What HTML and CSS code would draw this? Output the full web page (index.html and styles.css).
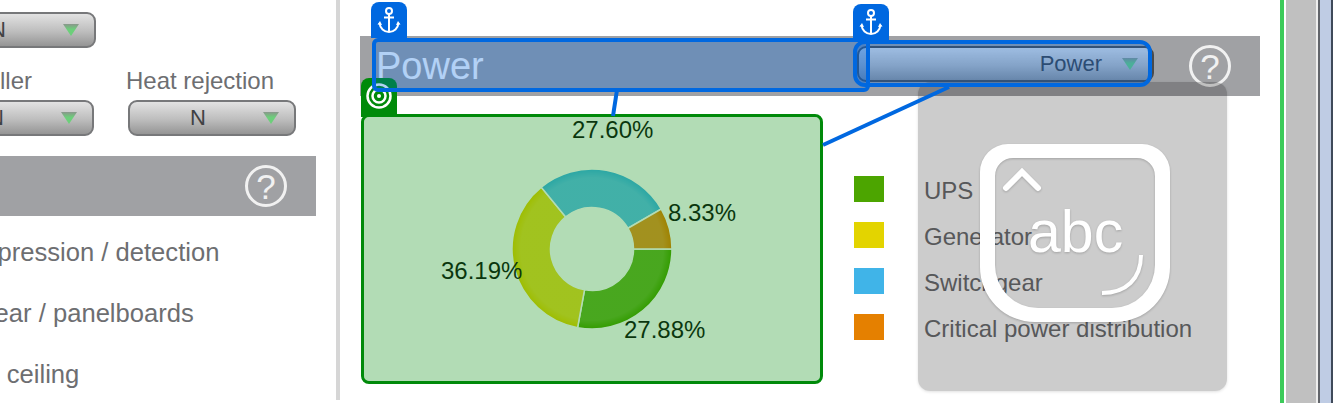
FILE: index.html
```html
<!DOCTYPE html>
<html lang="en">
<head>
    <meta charset="UTF-8">
    <meta name="viewport" content="width=device-width, initial-scale=1.0">
    <title>Dashboard editor</title>
    <link rel="stylesheet" href="styles.css">
</head>
<body>
    <div class="page">
        <div class="sidebar">
            <div class="field-row first-row">
                <div class="field">
                    <div class="dropdown"><span class="dropdown-text">N</span><span class="arrow"></span></div>
                </div>
            </div>
            <div class="field-row second-row">
                <div class="field">
                    <div class="field-label">Chiller</div>
                    <div class="dropdown"><span class="dropdown-text">N</span><span class="arrow"></span></div>
                </div>
                <div class="field">
                    <div class="field-label">Heat rejection</div>
                    <div class="dropdown"><span class="dropdown-text">N</span><span class="arrow"></span></div>
                </div>
            </div>
            <div class="section-bar side-bar">
                <span class="help">?</span>
            </div>
            <div class="side-list">
                <div>Fire suppression / detection</div>
                <div>Switchgear / panelboards</div>
                <div class="side-short">Raised ceiling</div>
            </div>
        </div>

        <div class="main">
            <div class="section-bar main-bar">
                <span class="bar-title">Power</span>
                <div class="dropdown dropdown-wide"><span class="dropdown-text">Power</span><span class="arrow"></span></div>
                <span class="help">?</span>
            </div>

            <div class="chart-row">
                <div class="chart-card">
                    <svg class="donut" width="162" height="162" viewBox="-80 -80 160 160">
                        <defs>
                            <radialGradient id="gloss" gradientUnits="userSpaceOnUse" cx="0" cy="0" r="80">
                                <stop offset="0.5" stop-color="#fff" stop-opacity="0.16"></stop>
                                <stop offset="0.88" stop-color="#fff" stop-opacity="0.16"></stop>
                                <stop offset="0.98" stop-color="#fff" stop-opacity="0"></stop>
                            </radialGradient>
                        </defs>
                        <path class="slice" fill="#4ca500" d="M79 0 A79 79 0 0 1 -14.23 77.7 L-7.38 40.33 A41 41 0 0 0 41 0Z"></path>
                        <path class="slice" fill="#e3d400" d="M-14.23 77.7 A79 79 0 0 1 -50.09 -61.09 L-25.99 -31.71 A41 41 0 0 0 -7.38 40.33Z"></path>
                        <path class="slice" fill="#40b4e8" d="M-50.09 -61.09 A79 79 0 0 1 68.42 -39.49 L35.51 -20.5 A41 41 0 0 0 -25.99 -31.71Z"></path>
                        <path class="slice" fill="#e58000" d="M68.42 -39.49 A79 79 0 0 1 79 0 L41 0 A41 41 0 0 0 35.51 -20.5Z"></path>
                        <path fill="url(#gloss)" fill-rule="evenodd" d="M79 0 A79 79 0 1 1 -79 0 A79 79 0 1 1 79 0Z M41 0 A41 41 0 1 0 -41 0 A41 41 0 1 0 41 0Z"></path>
                    </svg>
                    <span class="pct pct-switch">27.60%</span>
                    <span class="pct pct-critical">8.33%</span>
                    <span class="pct pct-generator">36.19%</span>
                    <span class="pct pct-ups">27.88%</span>
                </div>

                <div class="legend">
                    <div class="legend-row"><span class="swatch swatch-ups"></span>UPS</div>
                    <div class="legend-row"><span class="swatch swatch-generator"></span>Generator</div>
                    <div class="legend-row"><span class="swatch swatch-switch"></span>Switchgear</div>
                    <div class="legend-row"><span class="swatch swatch-critical"></span>Critical power distribution</div>
                </div>
            </div>

            <!-- editor overlays -->
            <div class="text-hint">
                <svg width="309" height="309" viewBox="0 0 309 309">
                    <path class="hint-frame" fill-rule="evenodd" d="M90 62 H224 A28 28 0 0 1 252 90 V185 A55 55 0 0 1 197 240 H117 A55 55 0 0 1 62 185 V90 A28 28 0 0 1 90 62Z M95 76 H219 A18 18 0 0 1 237 94 V183 A43 43 0 0 1 194 226 H120 A43 43 0 0 1 77 183 V94 A18 18 0 0 1 95 76Z"></path>
                    <path class="hint-line hint-caret" d="M88 106 L104 90 L120 106"></path>
                    <path class="hint-line hint-curve" d="M223 173 C223 197 208 211 184 211"></path>
                    <text class="hint-text" x="110" y="170">abc</text>
                </svg>
            </div>

            <svg class="links" width="940" height="403">
                <line x1="277" y1="90" x2="273" y2="116"></line>
                <line x1="609" y1="87" x2="483" y2="145"></line>
            </svg>

            <div class="tag tag-green">
                <svg width="36" height="36" viewBox="0 0 36 36">
                    <circle class="tag-stroke" cx="18" cy="18" r="11.5"></circle>
                    <circle class="tag-stroke" cx="18" cy="18" r="6.5"></circle>
                    <circle class="tag-dot" cx="18" cy="18" r="2"></circle>
                </svg>
            </div>

            <div class="select-box select-title"></div>
            <div class="select-box select-dropdown"></div>

            <div class="tag tag-blue tag-title">
                <svg width="36" height="36" viewBox="0 0 36 36">
                    <circle class="tag-stroke tag-thin" cx="18" cy="9" r="3"></circle>
                    <path class="tag-stroke tag-thin" d="M18 12 V30 M13 15.5 H23 M8.5 21 C9 26.5 13 30 18 30 C23 30 27 26.5 27.5 21"></path>
                    <path class="tag-dot" d="M6.5 22.5 L9 19 L11 23Z M29.5 22.5 L27 19 L25 23Z"></path>
                </svg>
            </div>
            <div class="tag tag-blue tag-dropdown">
                <svg width="36" height="36" viewBox="0 0 36 36">
                    <circle class="tag-stroke tag-thin" cx="18" cy="9" r="3"></circle>
                    <path class="tag-stroke tag-thin" d="M18 12 V30 M13 15.5 H23 M8.5 21 C9 26.5 13 30 18 30 C23 30 27 26.5 27.5 21"></path>
                    <path class="tag-dot" d="M6.5 22.5 L9 19 L11 23Z M29.5 22.5 L27 19 L25 23Z"></path>
                </svg>
            </div>
        </div>

        <div class="rails">
            <div class="rail rail-green"></div>
            <div class="rail rail-gap"></div>
            <div class="rail rail-gray"></div>
            <div class="rail rail-light"></div>
            <div class="rail rail-dark"></div>
            <div class="rail rail-blue"></div>
            <div class="rail rail-edge"></div>
        </div>
    </div>
</body>
</html>
```

FILE: styles.css
```css
body {
    margin: 0;
    font-family: "Liberation Sans", Arial, sans-serif;
    color: #6d6e71;
    background-color: #fff;
}
.page {
    display: flex;
    height: 403px;
    overflow: hidden;
}

/* left panel */
.sidebar {
    width: 336px;
    height: 400px;
    flex: none;
    border-right: 4px solid #d6d6d6;
    overflow: hidden;
}
.field-row {
    display: flex;
    gap: 34px;
}
.first-row {
    margin: 12px 0 0 -72px;
}
.second-row {
    margin: 19px 0 0 -74px;
}
.field {
    width: 168px;
    flex: none;
}
.field-label {
    margin: 0 12px 5px -12px;
    font-size: 24px;
    line-height: 28px;
    text-align: center;
    white-space: nowrap;
}
.dropdown {
    box-sizing: border-box;
    display: flex;
    align-items: center;
    height: 36px;
    padding: 0 15px;
    border: 2px solid #77787a;
    border-radius: 9px;
    background: linear-gradient(#e2e2e2, #bdbdbd 55%, #959595);
    color: #404144;
    font-size: 22px;
}
.dropdown-text {
    flex: 1;
    padding-right: 12px;
    text-align: center;
}
.arrow {
    width: 16px;
    height: 12px;
    background: linear-gradient(#8a968c, #6ccf7a 45%);
    clip-path: polygon(0 0, 100% 0, 50% 100%);
}
.section-bar {
    display: flex;
    align-items: center;
    justify-content: flex-end;
    height: 60px;
    padding-right: 29px;
    background-color: #a0a1a4;
    box-sizing: border-box;
}
.side-bar {
    width: 316px;
    margin-top: 20px;
}
.side-list {
    margin: 21px 0 0 -95px;
    font-size: 25.6px;
    line-height: 30px;
    white-space: nowrap;
}
.side-list div {
    margin-bottom: 31px;
}
.side-list .side-short {
    margin-left: 15px;
}
.help {
    box-sizing: border-box;
    width: 42px;
    height: 42px;
    flex: none;
    border: 3px solid #f1f1f1;
    border-radius: 50%;
    color: #f1f1f1;
    font-size: 35px;
    line-height: 37px;
    text-align: center;
}

/* main area */
.main {
    position: relative;
    width: 920px;
    flex: none;
    padding: 36px 0 0 20px;
}
.main-bar {
    width: 900px;
}
.bar-title {
    margin: 0 auto 0 16px;
    color: #fff;
    font-size: 38px;
}
.dropdown-wide {
    width: 297px;
    margin: 0 35px 4px 0;
    border-color: #4a4a4a;
    padding-right: 14px;
}
.dropdown-wide .dropdown-text {
    padding-right: 20px;
    text-align: right;
}
.chart-row {
    display: flex;
    margin: 18px 0 0 1px;
}
.chart-card {
    position: relative;
    box-sizing: border-box;
    display: flex;
    align-items: center;
    justify-content: center;
    width: 462px;
    height: 270px;
    flex: none;
    border: 3px solid #008a0a;
    border-radius: 8px;
}
.chart-card::after {
    content: "";
    position: absolute;
    inset: 0;
    border-radius: 5px;
    background-color: rgba(0, 138, 10, 0.3);
}
.slice {
    stroke: #fff;
    stroke-width: 1.5;
}
.pct {
    position: absolute;
    color: #111;
    font-size: 24px;
    line-height: 28px;
}
.pct-switch {
    left: 208px;
    top: -1px;
}
.pct-critical {
    left: 304px;
    top: 82px;
}
.pct-generator {
    left: 77px;
    top: 140px;
}
.pct-ups {
    left: 260px;
    top: 199px;
}
.legend {
    display: flex;
    flex-direction: column;
    gap: 20px;
    margin: 62px 0 0 31px;
}
.legend-row {
    display: flex;
    height: 26px;
    font-size: 24px;
    line-height: 30px;
    white-space: nowrap;
}
.swatch {
    width: 30px;
    height: 26px;
    margin-right: 40px;
}
.swatch-ups {
    background-color: #4ca500;
}
.swatch-generator {
    background-color: #e3d400;
}
.swatch-switch {
    background-color: #40b4e8;
}
.swatch-critical {
    background-color: #e58000;
}

/* overlays */
.text-hint {
    position: absolute;
    left: 578px;
    top: 82px;
    width: 309px;
    height: 309px;
    border-radius: 12px;
    background-color: rgba(0, 0, 0, 0.2);
    box-shadow: 0 1px 3px rgba(0, 0, 0, 0.12);
}
.text-hint svg {
    display: block;
    filter: drop-shadow(0 1px 1px rgba(0, 0, 0, 0.2));
}
.hint-frame {
    fill: #fff;
}
.hint-line {
    fill: none;
    stroke: #fff;
}
.hint-caret {
    stroke-width: 6;
    stroke-linecap: round;
}
.hint-curve {
    stroke-width: 4;
}
.hint-text {
    fill: #fff;
    font-size: 59px;
}
.links {
    position: absolute;
    left: 0;
    top: 0;
}
.links line {
    stroke: #0068e0;
    stroke-width: 4;
}
.tag {
    position: absolute;
    width: 36px;
    height: 36px;
    border-radius: 8px 8px 0 0;
}
.tag svg {
    display: block;
}
.tag-stroke {
    fill: none;
    stroke: #fff;
    stroke-width: 2.5;
}
.tag-thin {
    stroke-width: 2;
}
.tag-dot {
    fill: #fff;
}
.tag-green {
    left: 21px;
    top: 78px;
    height: 39px;
    background-color: #008a0a;
}
.tag-blue {
    background-color: #0068e0;
}
.tag-title {
    left: 31px;
    top: 2px;
}
.tag-dropdown {
    left: 513px;
    top: 4px;
}
.select-box {
    position: absolute;
    box-sizing: border-box;
    border: 4px solid #0068e0;
    background-color: rgba(0, 104, 224, 0.3);
}
.select-title {
    left: 32px;
    top: 38px;
    width: 498px;
    height: 54px;
    border-radius: 6px;
}
.select-dropdown {
    left: 513px;
    top: 40px;
    width: 299px;
    height: 47px;
    border-radius: 12px;
}

/* right edge */
.rails {
    display: flex;
    flex: none;
}
.rail-green {
    width: 4px;
    background-color: #3ccb5a;
}
.rail-gap {
    width: 2px;
}
.rail-gray {
    width: 30px;
    background-color: #c0c0c0;
}
.rail-light {
    width: 2px;
    background-color: #eee;
}
.rail-dark {
    width: 2px;
    background-color: #62656b;
}
.rail-blue {
    width: 11px;
    background-color: #bfcce4;
}
.rail-edge {
    width: 2px;
    background-color: #3f4a5a;
}
```
